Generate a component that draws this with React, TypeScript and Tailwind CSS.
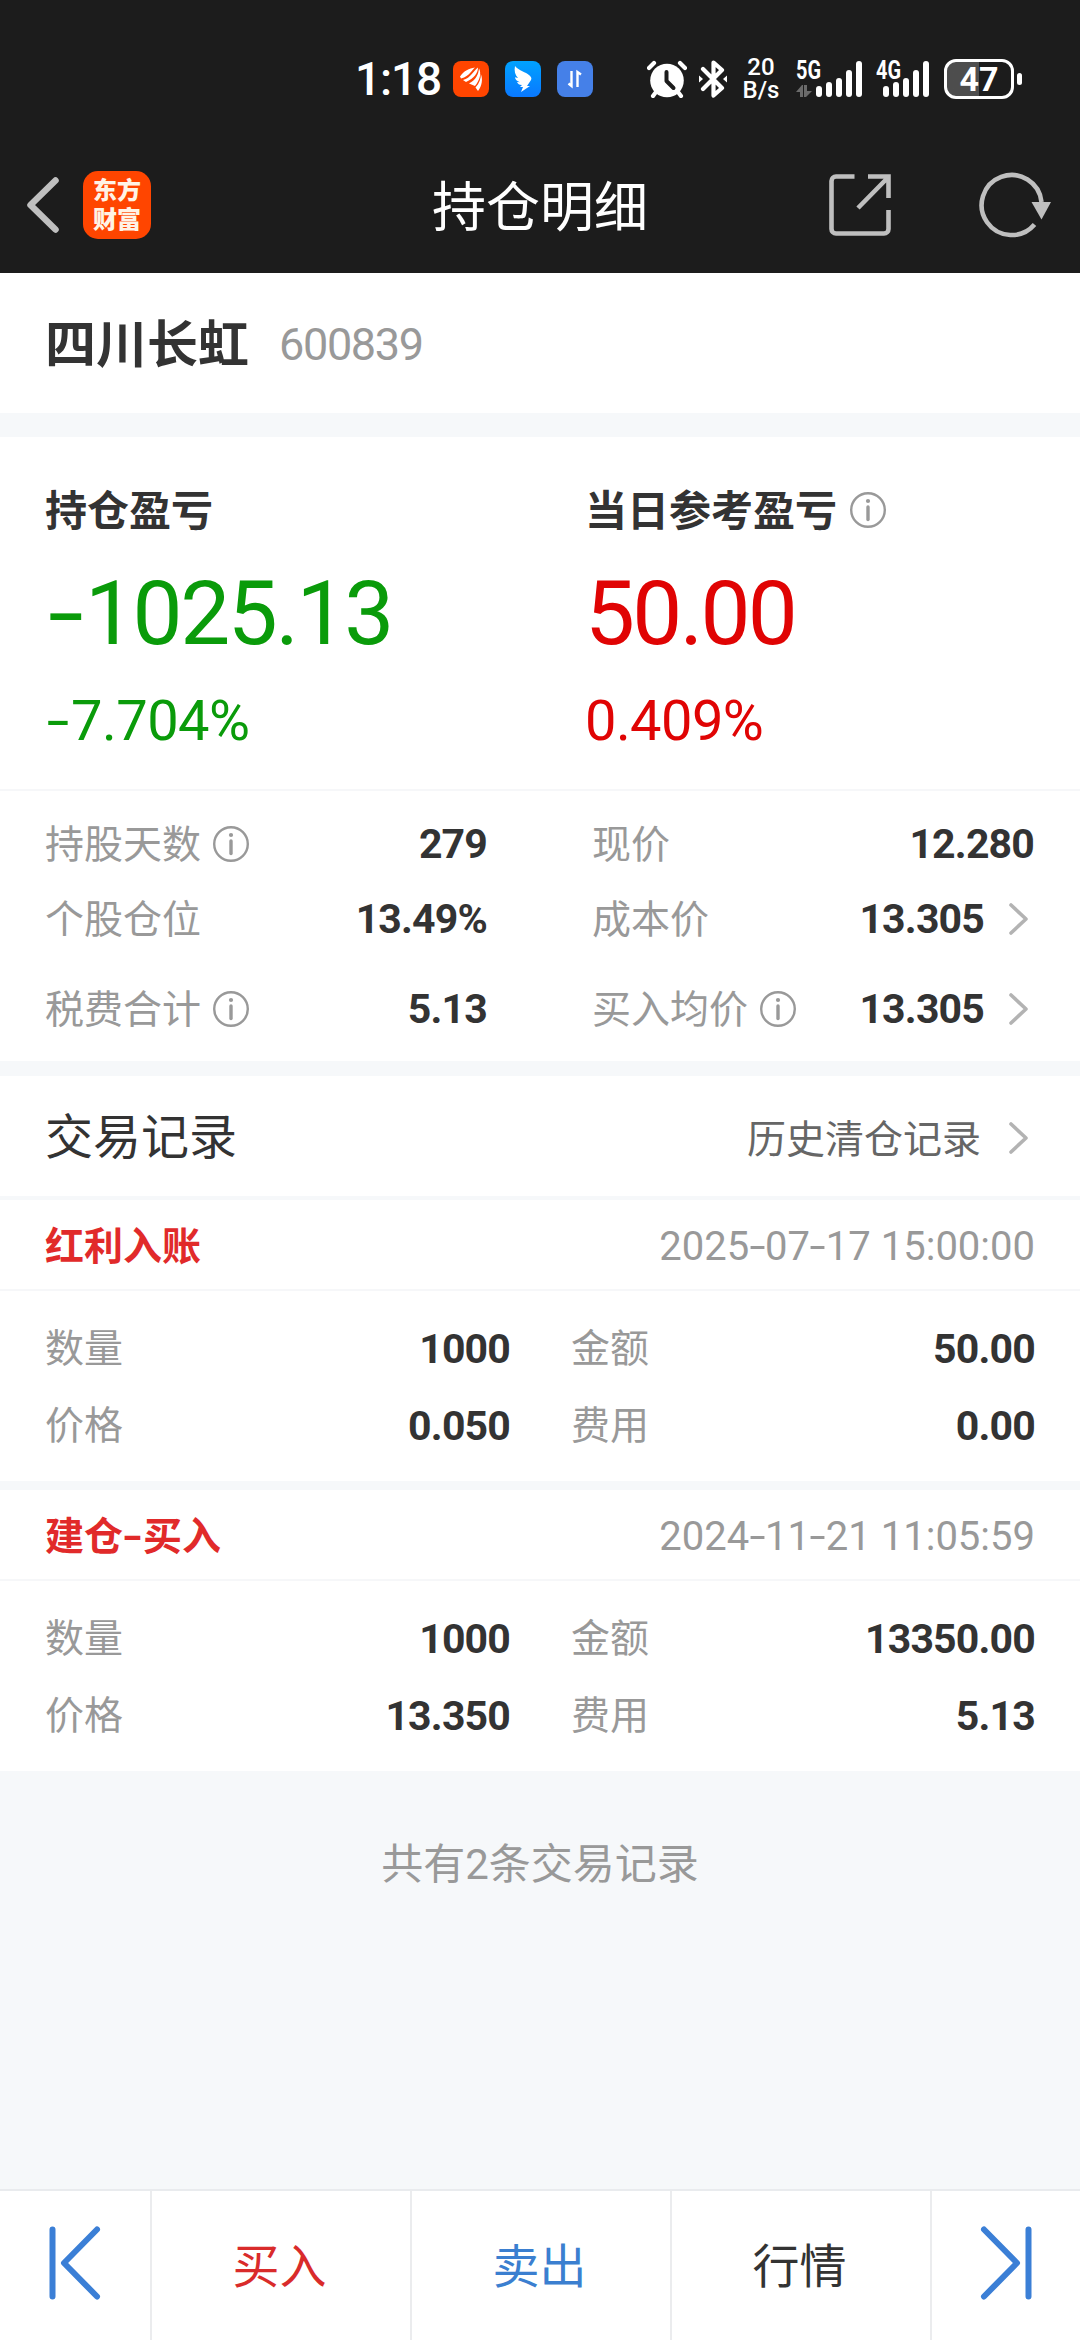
import { useState, type ReactNode } from "react";
import { clsx } from "clsx";

type Pair = { label: string; value: string };

type TradeRecord = {
  title: string;
  time: string;
  rows: [Pair, Pair][];
};

const RECORDS: TradeRecord[] = [
  {
    title: "红利入账",
    time: "2025-07-17 15:00:00",
    rows: [
      [{ label: "数量", value: "1000" }, { label: "金额", value: "50.00" }],
      [{ label: "价格", value: "0.050" }, { label: "费用", value: "0.00" }],
    ],
  },
  {
    title: "建仓-买入",
    time: "2024-11-21 11:05:59",
    rows: [
      [{ label: "数量", value: "1000" }, { label: "金额", value: "13350.00" }],
      [{ label: "价格", value: "13.350" }, { label: "费用", value: "5.13" }],
    ],
  },
];

/* ---------- 图标 ---------- */
function InfoIcon() {
  return (
    <svg width="36" height="36" viewBox="0 0 36 36" className="shrink-0">
      <circle cx="18" cy="18" r="16.8" fill="none" stroke="#999" strokeWidth="2.4" />
      <circle cx="18" cy="9" r="2.1" fill="#999" />
      <path d="M18 15v12.5" stroke="#999" strokeWidth="3.4" strokeLinecap="round" />
    </svg>
  );
}

function ChevronRight() {
  return (
    <svg width="19" height="32" viewBox="0 0 19 32" className="shrink-0">
      <path d="M2 2l15 14L2 30" fill="none" stroke="#b3b3b3" strokeWidth="3.6" strokeLinecap="round" strokeLinejoin="round" />
    </svg>
  );
}

function Signal({ name, arrows }: { name: string; arrows?: boolean }) {
  const bars = [11, 15, 19, 27, 36];
  return (
    <svg width="66" height="52" viewBox="0 -6 66 52" className="shrink-0">
      <text
        x="0"
        y="20"
        textLength="25"
        lengthAdjust="spacingAndGlyphs"
        className="fill-white text-[25px] font-bold"
      >
        {name}
      </text>
      {arrows && (
        <path d="M0 33l6-7h1v12H4v-5zM16 32l-6 6H8V26h3v6z" fill="#6b6b6b" />
      )}
      {bars.map((h, i) => (
        <rect
          key={h}
          x={(arrows ? 20 : 7) + i * 10}
          y={38 - h}
          width="6"
          height={h}
          rx="3"
          fill="#fff"
        />
      ))}
    </svg>
  );
}

// 把连字符拉宽，和数字字形保持协调
function Dashed({ text, wide }: { text: string; wide?: boolean }) {
  const parts = text.split("-");
  return (
    <span className="whitespace-pre">
      {parts.map((part, i) => (
        <span key={i}>
          {i > 0 && (
            <span className={clsx("inline-block scale-x-[1.45]", wide ? "mr-[0.11em] ml-[0.09em]" : "mx-[0.06em]")}>-</span>
          )}
          {part}
        </span>
      ))}
    </span>
  );
}

function StatusBar() {
  return (
    <div className="flex h-[136px] items-center pt-[22px] pl-[355px] text-white">
      <span className="w-[98px] text-[46px] leading-none font-medium tracking-[-0.025em]">1:18</span>
      <svg width="36" height="36" viewBox="0 0 36 36">
        <rect width="36" height="36" rx="8" fill="#ff4500" />
        {/* 羽翼形 logo */}
        <g fill="#fff">
          <path d="M7 15.500C11 9.500 16 7.500 22 6.500C19 8.500 17 15 8 17.500z" />
          <path d="M10 19C18 17 20 10 25 6.500C25 12 21 17.500 13 21z" />
          <path d="M16 22.500C23 19 25.500 13 26 7.500C28.500 12 27 19 22 25z" />
          <path d="M22.500 26.500C26.500 22 28 17.500 27.800 13C30 18 29 25 25 30z" />
        </g>
      </svg>
      <svg width="36" height="36" viewBox="0 0 36 36" className="ml-4">
        <defs>
          <linearGradient id="wing" x1="0" y1="0" x2="0" y2="1">
            <stop offset="0" stopColor="#00a2ff" />
            <stop offset="1" stopColor="#0a78ff" />
          </linearGradient>
        </defs>
        <rect width="36" height="36" rx="8" fill="url(#wing)" />
        <path
          d="M10 5c4 5 11 6 14 9c2 2 3 3 2 5l-4 6h3l-9 6l2-5h-3l2-2c-3 0-4-1-5-3l3 .3c-3-1-5-3-5-5l3 .8c-3-3-4-7-3-12z"
          fill="#fff"
        />
      </svg>
      <svg width="36" height="36" viewBox="0 0 36 36" className="ml-4">
        <rect width="36" height="36" rx="8" fill="#4580e8" />
        <path d="M14.500 10v15l-3-2.500M20.500 26V11l3.500 2.500" fill="none" stroke="#fff" strokeWidth="2.400" />
      </svg>
      {/* 闹钟 */}
      <svg width="40" height="38" viewBox="0 0 40 38" className="ml-[54px]">
        <path d="M2 8l5-5M38 8l-5-5M9 32l-3 4M31 32l3 4" stroke="#fff" strokeWidth="4.200" strokeLinecap="round" />
        <circle cx="20" cy="20.500" r="16.800" fill="#fff" />
        <path d="M19.500 12v9l7 7" fill="none" stroke="#1c1c1c" strokeWidth="4" strokeLinecap="round" strokeLinejoin="round" />
      </svg>
      {/* 蓝牙 */}
      <svg width="28" height="38" viewBox="0 0 28 38" className="ml-3">
        <path d="M4 9l19 19l-8.500 7.500V2.500L23 10L4 29" fill="none" stroke="#fff" strokeWidth="4.200" strokeLinejoin="round" strokeLinecap="round" />
        <path d="M0 15.500l4 3.500l-4 3.500zM28 15.500l-4 3.500l4 3.500z" fill="#fff" />
      </svg>
      <div className="ml-4 flex w-[36px] flex-col items-center text-[24px] leading-[23px] font-medium">
        <span>20</span>
        <span>B/s</span>
      </div>
      <div className="ml-[17px] w-[80px]">
        <Signal name="5G" arrows />
      </div>
      <div className="w-[68px]">
        <Signal name="4G" />
      </div>
      <div className="flex items-center gap-[3px]">
        <div className="grid h-10 w-[70px] place-items-center rounded-[12px] border-[3px] border-white bg-linear-to-r from-[#4d4d4d] from-50% to-[#1c1c1c] to-50% text-[34px] leading-none font-bold">
          47
        </div>
        <div className="h-3 w-[5px] rounded-full bg-white" />
      </div>
    </div>
  );
}

function TitleBar() {
  return (
    <div className="grid h-[137px] grid-cols-3 items-center">
      <div className="flex items-center pl-[26px]">
        <svg width="34" height="58" viewBox="0 0 34 58">
          <path d="M29.500 4.500L4.500 29l25 24.500" fill="none" stroke="#bfbfbf" strokeWidth="6.500" strokeLinecap="round" strokeLinejoin="round" />
        </svg>
        <div className="ml-[23px] flex h-[68px] w-[68px] flex-col items-center justify-center gap-[5px] rounded-[15px] bg-[#ff4500] pt-[2px] text-[24px] leading-[24px] font-black text-[#fff3e6]">
          <span>东方</span>
          <span>财富</span>
        </div>
      </div>
      <h1 className="pt-[8px] text-center text-[54px] leading-none text-white">持仓明细</h1>
      <div className="flex items-center justify-end gap-[88px] pr-[28px]">
        <svg width="62" height="62" viewBox="0 0 62 62">
          <g fill="none" stroke="#bfbfbf" strokeWidth="4.600">
            <path d="M25.500 2.500H7a4.500 4.500 0 0 0-4.500 4.500v48A4.500 4.500 0 0 0 7 59.500h48a4.500 4.500 0 0 0 4.500-4.500V36" />
            <path d="M39 2.500h20.500V24M29 34L58.500 4" />
          </g>
        </svg>
        <svg width="73" height="66" viewBox="0 0 73 66">
          <path d="M55.500 52.500A30 30 0 1 1 62.500 30" fill="none" stroke="#bfbfbf" strokeWidth="4.600" />
          <path d="M52.500 30H72L62.500 47.500z" fill="#bfbfbf" />
        </svg>
      </div>
    </div>
  );
}

/* ---------- 盈亏 ---------- */
function Profit({ label, amount, percent, up, info }: {
  label: string;
  amount: string;
  percent: string;
  up?: boolean;
  info?: boolean;
}) {
  return (
    <div className={clsx("w-[540px] pl-[45px]", up ? "text-[#e00404]" : "text-[#0a9b0a]")}>
      <div className="flex h-[60px] items-center text-[42px] leading-none font-bold text-[#333]">
        <span className="pt-[4px]">{label}</span>
        {info && <span className="ml-[13px]"><InfoIcon /></span>}
      </div>
      <div className={clsx("mt-[23px] flex h-[100px] items-center text-[89px] leading-none", up ? "tracking-[-0.03em]" : "tracking-[-0.027em]")}>
        <Dashed text={amount} wide />
      </div>
      <div className="mt-[28px] flex h-[60px] items-center text-[56px] leading-none tracking-[-0.01em]">
        <Dashed text={percent} wide />
      </div>
    </div>
  );
}

function Stat({ label, value, info, link, className }: Pair & {
  info?: boolean;
  link?: boolean;
  className: string;
}) {
  return (
    <div className={clsx("flex items-center", className)}>
      <span className="pt-[2px] text-[39px] leading-none text-[#999]">{label}</span>
      {info && <span className="ml-[12px]"><InfoIcon /></span>}
      <span
        className={clsx(
          "ml-auto pt-px text-[41px] leading-none font-bold text-[#333] tracking-[-0.02em]",
          link && "mr-[25px]"
        )}
      >
        {value}
      </span>
      {link && <span className="mr-[6px]"><ChevronRight /></span>}
    </div>
  );
}

function RecordCard({ record }: { record: TradeRecord }) {
  return (
    <section className="bg-white">
      <div className="flex h-[91px] items-center justify-between border-b-2 border-[#f6f7f9] px-[45px]">
        <h3 className="pt-[5px] text-[39px] leading-none font-bold text-[#e12a2a]">
          <Dashed text={record.title} />
        </h3>
        <time className="pt-[4px] text-[40px] leading-none text-[#999]">
          <Dashed text={record.time} />
        </time>
      </div>
      <div className="h-[190px] pt-[19px]">
        {record.rows.map(([a, b]) => (
          <div key={a.label} className="flex h-[77px] items-center pl-[45px]">
            <Stat {...a} className="w-[465px]" />
            <Stat {...b} className="ml-[61px] w-[464px]" />
          </div>
        ))}
      </div>
    </section>
  );
}

/* ---------- 底部操作栏 ---------- */
function SkipIcon({ flip }: { flip?: boolean }) {
  return (
    <svg width="52" height="74" viewBox="0 0 52 74" className={clsx("mb-[5px]", flip && "-scale-x-100")}>
      <path d="M3.500 3.500v67M48 3.500L15 37l33 33.500" fill="none" stroke="#3b7fd6" strokeWidth="6" strokeLinecap="round" strokeLinejoin="round" />
    </svg>
  );
}

function BottomCell({ children, className }: { children: ReactNode; className: string }) {
  return (
    <button className={clsx("grid h-full place-items-center text-[47px] leading-none", className)}>
      {children}
    </button>
  );
}

export default function App() {
  const [records] = useState(RECORDS);

  return (
    <div className="flex h-[2340px] w-[1080px] flex-col overflow-hidden bg-[#f6f8fa] font-[Roboto,'Noto_Sans_CJK_SC',sans-serif]">
      <header className="h-[273px] shrink-0 bg-[#1c1c1c]">
        <StatusBar />
        <TitleBar />
      </header>

      <section className="flex h-[140px] items-center bg-white pl-[45px]">
        <h2 className="pt-[5px] text-[51px] leading-none font-bold text-[#333]">四川长虹</h2>
        <span className="ml-[30px] pt-[2px] text-[45px] leading-none tracking-[-0.03em] text-[#999]">600839</span>
      </section>

      <section className="mt-6 bg-white">
        <div className="flex h-[354px] border-b-2 border-[#f6f7f9] pt-[43px]">
          <Profit label="持仓盈亏" amount="-1025.13" percent="-7.704%" />
          <Profit label="当日参考盈亏" amount="50.00" percent="0.409%" up info />
        </div>
        <div className="flex h-[270px] justify-between pt-[15px] pr-[46px] pl-[45px]">
          <div className="flex w-[442px] flex-col">
            <Stat label="持股天数" value="279" info className="h-[76px]" />
            <Stat label="个股仓位" value="13.49%" className="h-[74px]" />
            <Stat label="税费合计" value="5.13" info className="mt-[15px] h-[76px]" />
          </div>
          <div className="flex w-[442px] flex-col">
            <Stat label="现价" value="12.280" className="h-[76px]" />
            <Stat label="成本价" value="13.305" link className="h-[74px]" />
            <Stat label="买入均价" value="13.305" info link className="mt-[15px] h-[76px]" />
          </div>
        </div>
      </section>

      <section className="mt-[15px] flex h-[120px] items-center justify-between bg-white pr-[52px] pl-[45px]">
        <h2 className="pt-[3px] text-[48px] leading-none text-[#333]">交易记录</h2>
        <div className="flex items-center gap-[28px] pt-1 text-[39px] leading-none text-[#666]">
          <span className="pt-[4px]">历史清仓记录</span>
          <ChevronRight />
        </div>
      </section>

      <div className="mt-1 flex flex-col gap-[9px]">
        {records.map((r) => (
          <RecordCard key={r.time} record={r} />
        ))}
      </div>

      <p className="mt-[73px] text-center text-[42px] leading-none text-[#999]">共有{records.length}条交易记录</p>

      <nav className="mt-auto flex h-[151px] border-t-2 border-[#e9ebee] bg-white">
        <BottomCell className="w-[150px]"><SkipIcon /></BottomCell>
        <BottomCell className="w-[260px] border-l-2 border-[#ebecee] pt-[2px] pr-[3px] text-[#d92b2b]">买入</BottomCell>
        <BottomCell className="w-[260px] border-l-2 border-[#ebecee] pt-[2px] pr-[3px] text-[#3b7fd0]">卖出</BottomCell>
        <BottomCell className="w-[260px] border-l-2 border-[#ebecee] pt-[2px] pr-[3px] text-[#333]">行情</BottomCell>
        <BottomCell className="w-[150px] border-l-2 border-[#ebecee]"><SkipIcon flip /></BottomCell>
      </nav>
    </div>
  );
}
